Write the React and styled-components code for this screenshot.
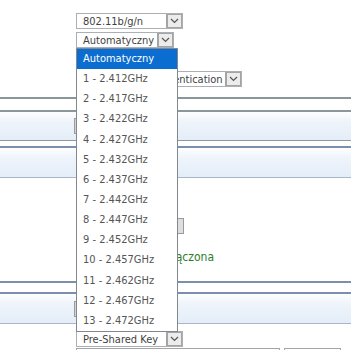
import React from 'react'
import styled, { createGlobalStyle } from 'styled-components'

const GlobalStyle = createGlobalStyle`
  html, body {
    margin: 0;
    padding: 0;
    background: #fff;
  }
  body {
    font-family: "DejaVu Sans Condensed", "DejaVu Sans", "Liberation Sans", sans-serif;
    font-stretch: condensed;
    font-size: 11px;
    color: #444;
  }
`

const Page = styled.div`
  position: relative;
  width: 351px;
  height: 350px;
  overflow: hidden;
  padding-top: 13px;
  box-sizing: border-box;
`

const Row = styled.div`
  display: flex;
  align-items: center;
  gap: ${p => p.$spacing ?? 0}px;
  padding-left: ${p => p.$indent ?? 76}px;
  margin-top: ${p => p.$gap ?? 0}px;
  height: ${p => p.$h ?? 16}px;
`

const SelectBox = styled.div`
  box-sizing: border-box;
  width: ${p => p.$w}px;
  height: 16px;
  border: 1px solid #a9b1b7;
  background: #fff;
  display: flex;
  align-items: center;
  justify-content: space-between;
  padding-left: ${p => p.$pad ?? 6}px;
  color: #3f3f3f;
  font-size: 11px;
  white-space: nowrap;
  overflow: hidden;
`

const Arrow = styled.span`
  flex: none;
  box-sizing: border-box;
  width: 17px;
  height: 16px;
  margin-right: -1px;
  border: 2px solid #a4a4a4;
  background: #ececec;
  display: flex;
  align-items: center;
  justify-content: center;
`

const Rule = styled.div`
  margin-top: ${p => p.$gap ?? 0}px;
  border-top: 2px solid ${p => p.$c};
  height: ${p => p.$space}px;
`

const HeaderBar = styled.div`
  margin-top: ${p => p.$gap ?? 0}px;
  height: ${p => p.$h}px;
  border-top: 2px solid ${p => p.$c};
  border-bottom: 1px solid ${p => p.$bottom};
  background: linear-gradient(to bottom, #fdfeff 0%, #eef4fb 35%, #e4edf8 100%);
  display: flex;
  align-items: center;
  padding-left: 74px;
`

const HeaderButton = styled.span`
  box-sizing: border-box;
  width: 100px;
  height: 16px;
  border: 1px solid #9c9c9c;
  background: #d2d2d2;
`

const Content = styled.div`
  height: 103px;
  display: flex;
  flex-direction: column;
`

const Button = styled.span`
  box-sizing: border-box;
  width: 108px;
  height: 16px;
  border: 1px solid #9a9a9a;
  background: #dedede;
`

const Status = styled.span`
  font-size: 12px;
  color: #2b7d2b;
  line-height: 14px;
`

const Input = styled.span`
  box-sizing: border-box;
  width: ${p => p.$w}px;
  height: 16px;
  border: 1px solid #a4a4a4;
  background: #fff;
`

const List = styled.ul`
  position: absolute;
  top: 48px;
  left: 76px;
  width: 102px;
  box-sizing: border-box;
  margin: 0;
  padding: 0;
  list-style: none;
  background: #fff;
  border: 1px solid #838890;
`

const Item = styled.li`
  height: 20.15px;
  line-height: 20px;
  padding-left: 6px;
  font-size: 11px;
  white-space: nowrap;
  color: ${p => (p.$active ? '#fff' : '#555')};
  background: ${p => (p.$active ? '#0b6dd0' : 'transparent')};
`

function Chevron() {
  return (
    <svg width="9" height="6" viewBox="0 0 9 6">
      <polyline points="1,1 4.5,4.5 8,1" fill="none" stroke="#555" strokeWidth="1.2" />
    </svg>
  )
}

function Select({ width, pad, children }) {
  return (
    <SelectBox $w={width} $pad={pad}>
      <span>{children}</span>
      <Arrow>
        <Chevron />
      </Arrow>
    </SelectBox>
  )
}

const channels = [
  'Automatyczny',
  '1 - 2.412GHz',
  '2 - 2.417GHz',
  '3 - 2.422GHz',
  '4 - 2.427GHz',
  '5 - 2.432GHz',
  '6 - 2.437GHz',
  '7 - 2.442GHz',
  '8 - 2.447GHz',
  '9 - 2.452GHz',
  '10 - 2.457GHz',
  '11 - 2.462GHz',
  '12 - 2.467GHz',
  '13 - 2.472GHz',
]

export default function App() {
  return (
    <>
      <GlobalStyle />
      <Page>
        <Row>
          <Select width={107}>802.11b/g/n</Select>
        </Row>
        <Row $gap={3}>
          <Select width={98}>Automatyczny</Select>
        </Row>
        <Row $gap={23}>
          <Select width={166} pad={14}>Shared Key Authentication</Select>
        </Row>

        <Rule $gap={10} $c="#8b9699" $space={11} />
        <HeaderBar $h={28} $c="#8a979b" $bottom="#8d999c">
          <HeaderButton />
        </HeaderBar>
        <HeaderBar $gap={5} $h={29} $c="#7b8fae" $bottom="#a9b5c8" />

        <Content>
          <Row $gap={40}>
            <Button />
          </Row>
          <Row $gap={16} $indent={162} $h={14}>
            <Status>Włączona</Status>
          </Row>
        </Content>

        <Rule $c="#7d8fae" $space={9} />
        <HeaderBar $h={29} $c="#7d8fae" $bottom="#a9b5c8">
          <HeaderButton />
        </HeaderBar>

        <Row $gap={7}>
          <Select width={107}>Pre-Shared Key</Select>
        </Row>
        <Row $gap={1} $spacing={4}>
          <Input $w={204} />
          <Input $w={57} />
        </Row>

        <List>
          {channels.map((c, i) => (
            <Item key={c} $active={i === 0}>
              {c}
            </Item>
          ))}
        </List>
      </Page>
    </>
  )
}
